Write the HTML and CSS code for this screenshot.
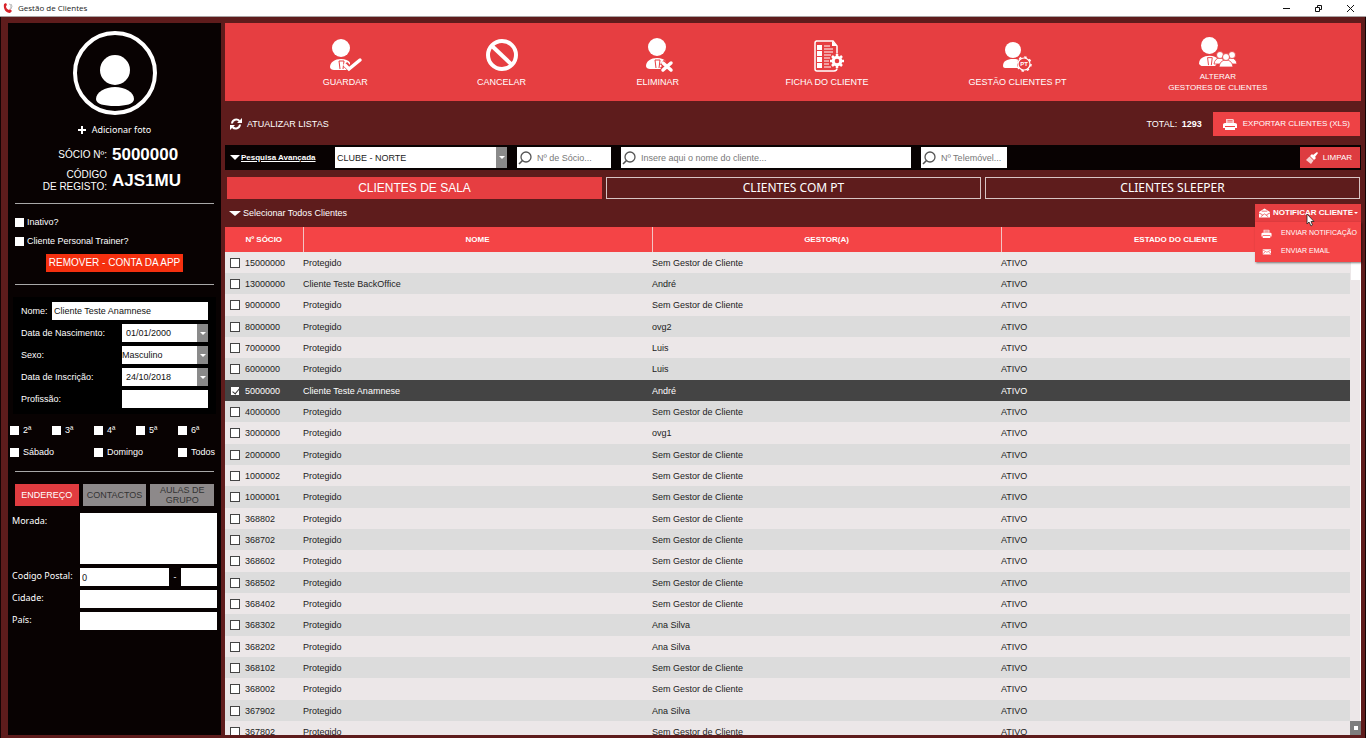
FILE: index.html
```html
<!DOCTYPE html>
<html lang="pt">
<head>
    <meta charset="UTF-8">
    <meta name="viewport" content="width=device-width, initial-scale=1.0">
    <title>Gestão de Clientes</title>
    <link rel="stylesheet" href="styles.css">
</head>
<body>

    <!-- shared icons -->
    <svg class="sprite" aria-hidden="true">
        <symbol id="i-suit" viewBox="0 0 20 32">
            <circle cx="11" cy="9" r="9" fill="#fff"/>
            <path d="M0 28c0-5 5-8 11-8s10 3 10 6l-4 5H4c-2 0-4-1-4-3z" fill="#fff"/>
            <path d="M9 22l1 8M14 22l-1 8M9 22h5" stroke="#e63e41" fill="none"/>
        </symbol>
        <symbol id="i-search" viewBox="0 0 14 14">
            <circle cx="8" cy="6" r="5" fill="none" stroke="#555" stroke-width="1.3"/>
            <path d="M4.500 9.500L1 13" stroke="#555" stroke-width="1.600"/>
        </symbol>
        <symbol id="i-print" viewBox="0 0 14 12">
            <path d="M3 5V1h7l1 1v3z" fill="#fff" opacity=".75"/>
            <path d="M4.500 2.500h5M4.500 4h5" stroke="#e63e41" stroke-width=".6"/>
            <path d="M0 6.500Q0 5 2 5h10q2 0 2 1.500V10h-2V8H2v2H0z" fill="#fff"/>
            <path d="M2 9h10v3H2z" fill="#fff"/>
        </symbol>
    </svg>

    <header class="titlebar">
        <svg class="app-logo" viewBox="0 0 10 10">
            <path d="M1 1L3 0l1 2-1 1c0 2 1 3 3 4l1-1 2 2-2 2C3 10 0 6 1 1z" fill="#d8232a"/>
            <path d="M6 1q2 0 2 2t-1 3M8 1q2 2 0 5" fill="none" stroke="#bbb" stroke-width="1"/>
        </svg>
        <span class="app-title">Gestão de Clientes</span>
        <div class="window-buttons">
            <button aria-label="Minimizar"><svg viewBox="0 0 9 9"><path d="M1 4.500h7" stroke="#111" fill="none"/></svg></button>
            <button aria-label="Restaurar"><svg viewBox="0 0 9 9"><path d="M1.500 3.500h4v4h-4zM3.500 3V1.500h4v4H6" stroke="#111" fill="none"/></svg></button>
            <button aria-label="Fechar"><svg viewBox="0 0 9 9"><path d="M1 1l7 7M8 1L1 8" stroke="#111" fill="none"/></svg></button>
        </div>
    </header>

    <div class="window">
        <aside class="sidebar">
            <div class="profile">
                <svg class="avatar" viewBox="0 0 84 84">
                    <circle cx="42" cy="42" r="40" fill="none" stroke="#fff" stroke-width="4"/>
                    <circle cx="42" cy="39" r="15" fill="#fff"/>
                    <path d="M23 68c0-7 9-12 19-12s19 5 19 12c0 5-8 7-19 7s-19-2-19-7z" fill="#fff"/>
                </svg>
                <button class="add-photo">
                    <svg viewBox="0 0 8 8"><path d="M4 0v8M0 4h8" stroke="#fff" stroke-width="2"/></svg>
                    Adicionar foto
                </button>
                <dl class="codes">
                    <dt>SÓCIO Nº:</dt><dd>5000000</dd>
                    <dt>CÓDIGO<br>DE REGISTO:</dt><dd>AJS1MU</dd>
                </dl>
            </div>

            <hr>

            <div class="flags">
                <label><input type="checkbox"> Inativo?</label>
                <label><input type="checkbox"> Cliente Personal Trainer?</label>
                <button class="remove-app">REMOVER - CONTA DA APP</button>
            </div>

            <hr>

            <form class="details">
                <div class="field">
                    <label for="nome">Nome:</label>
                    <input id="nome" class="wide" type="text" value="Cliente Teste Anamnese">
                </div>
                <div class="field">
                    <label for="nascimento">Data de Nascimento:</label>
                    <span class="combo date"><input id="nascimento" type="text" value="01/01/2000"><span class="drop"></span></span>
                </div>
                <div class="field">
                    <label for="sexo">Sexo:</label>
                    <span class="combo"><select id="sexo"><option>Masculino</option><option>Feminino</option></select><span class="drop"></span></span>
                </div>
                <div class="field">
                    <label for="inscricao">Data de Inscrição:</label>
                    <span class="combo date"><input id="inscricao" type="text" value="24/10/2018"><span class="drop"></span></span>
                </div>
                <div class="field">
                    <label for="profissao">Profissão:</label>
                    <input id="profissao" class="short" type="text">
                </div>
            </form>

            <div class="days">
                <label><input type="checkbox"> 2ª</label>
                <label><input type="checkbox"> 3ª</label>
                <label><input type="checkbox"> 4ª</label>
                <label><input type="checkbox"> 5ª</label>
                <label><input type="checkbox"> 6ª</label>
                <label class="double"><input type="checkbox"> Sábado</label>
                <label class="double"><input type="checkbox"> Domingo</label>
                <label><input type="checkbox"> Todos</label>
            </div>

            <hr>

            <div class="side-tabs">
                <button class="active">ENDEREÇO</button>
                <button>CONTACTOS</button>
                <button>AULAS DE GRUPO</button>
            </div>

            <form class="address">
                <label for="morada">Morada:</label>
                <textarea id="morada"></textarea>
                <label for="postal">Codigo Postal:</label>
                <div class="postal">
                    <input id="postal" type="text" value="0">
                    <span>-</span>
                    <input class="suffix" type="text" aria-label="Sufixo postal">
                </div>
                <label for="cidade">Cidade:</label>
                <input id="cidade" type="text">
                <label for="pais">País:</label>
                <input id="pais" type="text">
            </form>
        </aside>

        <main class="content">
            <nav class="toolbar">
                <button>
                    <svg viewBox="0 0 36 36">
                        <use href="#i-suit" x="3" y="2" width="20" height="32"/>
                        <path d="M18 27l5 5 11-9" fill="none" stroke="#e63e41" stroke-width="6"/>
                        <path d="M18 28l4 4 11-9" fill="none" stroke="#fff" stroke-width="3.500" stroke-linecap="round"/>
                    </svg>
                    <span>GUARDAR</span>
                </button>
                <button>
                    <svg viewBox="0 0 36 36">
                        <circle cx="19" cy="18" r="14" fill="none" stroke="#fff" stroke-width="4"/>
                        <path d="M9 9l20 19" stroke="#fff" stroke-width="4"/>
                    </svg>
                    <span>CANCELAR</span>
                </button>
                <button>
                    <svg viewBox="0 0 36 36">
                        <use href="#i-suit" x="6" y="1" width="20" height="32"/>
                        <path d="M22 25l9 8M31 25l-9 8" stroke="#e63e41" stroke-width="6"/>
                        <path d="M23 26l8 7M31 26l-8 7" stroke="#fff" stroke-width="3.500" stroke-linecap="round"/>
                    </svg>
                    <span>ELIMINAR</span>
                </button>
                <button>
                    <svg viewBox="0 0 36 36">
                        <path d="M7 4h17l4 5v22q0 3-3 3H8q-2 0-2-2V6q0-2 2-2z" fill="none" stroke="#fff" stroke-width="1.500"/>
                        <path d="M23 4v5h5z" fill="#fff"/>
                        <path d="M8 8h5v5H8zM8 14h5v5H8zM8 20h5v5H8zM8 26h5v5H8z" fill="#fff"/>
                        <path d="M15 9h6M15 12h9M15 15h9M15 18h7M15 21h6M15 24h5M15 27h5M15 30h7" stroke="#fff"/>
                        <circle cx="28" cy="24" r="7.500" fill="#e63e41"/>
                        <circle cx="28" cy="24" r="3.800" fill="none" stroke="#fff" stroke-width="3"/>
                        <path d="M28 17v3M28 28v3M21 24h3M32 24h3M23 19l2 2M31 27l2 2M23 29l2-2M31 21l2-2" stroke="#fff" stroke-width="2.500"/>
                    </svg>
                    <span>FICHA DO CLIENTE</span>
                </button>
                <button>
                    <svg viewBox="0 0 36 36">
                        <circle cx="14" cy="13" r="8" fill="#fff"/>
                        <path d="M4 29c0-5 4-7 10-7 5 0 9 1 10 4l-3 5H6c-1 0-2-1-2-2z" fill="#fff"/>
                        <circle cx="25" cy="27" r="7" fill="#e63e41"/>
                        <circle cx="25" cy="27" r="6" fill="none" stroke="#fff" stroke-width="1.200"/>
                        <circle cx="25" cy="27" r="7" fill="none" stroke="#fff" stroke-width="1.500" stroke-dasharray="2.500 3"/>
                        <text x="25" y="29" class="pt-text">PT</text>
                    </svg>
                    <span>GESTÃO CLIENTES PT</span>
                </button>
                <button class="two-lines">
                    <svg viewBox="0 0 40 32">
                        <use href="#i-suit" x="1" y="1" width="19" height="30"/>
                        <g fill="#fff" stroke="#e63e41" stroke-width=".8">
                            <path d="M16 28q1-6 6-6 4 0 5 6zM28 28q1-6 5-6 5 0 6 6z"/>
                            <circle cx="22" cy="19" r="3.500"/>
                            <circle cx="34" cy="19" r="3.500"/>
                            <path d="M21 31q1-7 7-7t7 7z"/>
                            <circle cx="28" cy="21" r="3.500"/>
                        </g>
                    </svg>
                    <span>ALTERAR<br>GESTORES DE CLIENTES</span>
                </button>
            </nav>

            <div class="list-actions">
                <button class="refresh">
                    <svg viewBox="0 0 12 12">
                        <path d="M2 5.500A4.300 4.300 0 0 1 9.500 3M10 6.500A4.300 4.300 0 0 1 2.500 9" fill="none" stroke="#fff" stroke-width="2"/>
                        <path d="M12 0v5H7zM0 12V7h5z" fill="#fff"/>
                    </svg>
                    ATUALIZAR LISTAS
                </button>
                <span class="total">TOTAL: <b>1293</b></span>
                <button class="export">
                    <svg viewBox="0 0 14 12"><use href="#i-print"/></svg>
                    EXPORTAR CLIENTES (XLS)
                </button>
            </div>

            <div class="search-bar">
                <a class="advanced" href="#"><i class="triangle"></i><span>Pesquisa Avançada</span></a>
                <span class="combo club"><select aria-label="Clube"><option>CLUBE - NORTE</option></select><span class="drop"></span></span>
                <label class="search number"><svg viewBox="0 0 14 14"><use href="#i-search"/></svg><input type="text" placeholder="Nº de Sócio..." aria-label="Nº de Sócio"></label>
                <label class="search name"><svg viewBox="0 0 14 14"><use href="#i-search"/></svg><input type="text" placeholder="Insere aqui o nome do cliente..." aria-label="Nome do cliente"></label>
                <label class="search phone"><svg viewBox="0 0 14 14"><use href="#i-search"/></svg><input type="text" placeholder="Nº Telemóvel..." aria-label="Nº Telemóvel"></label>
                <button class="clear">
                    <svg viewBox="0 0 12 12">
                        <path d="M11 0l1 1-3 4 1 1-2 2-4-4 2-2 1 1z" fill="#fff"/>
                        <path d="M3.500 4.500l4 4L5 12 0 8z" fill="#fff" opacity=".75"/>
                    </svg>
                    LIMPAR
                </button>
            </div>

            <div class="tabs">
                <button class="active">CLIENTES DE SALA</button>
                <button>CLIENTES COM PT</button>
                <button>CLIENTES SLEEPER</button>
            </div>

            <div class="selection">
                <button class="select-all"><i class="triangle"></i>Selecionar Todos Clientes</button>
                <div class="notify">
                    <button class="notify-button">
                        <svg viewBox="0 0 12 10">
                            <path d="M0 4l6-4 6 4v6H0z" fill="#fff"/>
                            <path d="M3 3h6M0 5l4 2M12 5L8 7M2 9l4-3 4 3" fill="none" stroke="#e63e41" stroke-width=".8"/>
                        </svg>
                        NOTIFICAR CLIENTE
                        <i class="caret"></i>
                    </button>
                    <div class="menu">
                        <button><svg viewBox="0 0 14 12"><use href="#i-print"/></svg>ENVIAR NOTIFICAÇÃO</button>
                        <button>
                            <svg viewBox="0 0 14 12"><path d="M2 3h11v7H2z" fill="#fff"/><path d="M2 4l5.500 3L13 4M2 9l3-2M13 9l-3-2" fill="none" stroke="#f44446" stroke-width=".8"/></svg>
                            ENVIAR EMAIL
                        </button>
                    </div>
                    <svg class="pointer" viewBox="0 0 9 14">
                        <path d="M1 1v10l2-2 2 4 1.500-1L5 8.500h3z" fill="#fff" stroke="#222" stroke-width=".8"/>
                    </svg>
                </div>
            </div>

            <div class="grid">
                <table>
                    <thead>
                        <tr><th class="col-id">Nº SÓCIO</th><th>NOME</th><th>GESTOR(A)</th><th>ESTADO DO CLIENTE</th></tr>
                    </thead>
                    <tbody>
                        <tr><td><label><input type="checkbox"> 15000000</label></td><td>Protegido</td><td>Sem Gestor de Cliente</td><td>ATIVO</td></tr>
                        <tr><td><label><input type="checkbox"> 13000000</label></td><td>Cliente Teste BackOffice</td><td>André</td><td>ATIVO</td></tr>
                        <tr><td><label><input type="checkbox"> 9000000</label></td><td>Protegido</td><td>Sem Gestor de Cliente</td><td>ATIVO</td></tr>
                        <tr><td><label><input type="checkbox"> 8000000</label></td><td>Protegido</td><td>ovg2</td><td>ATIVO</td></tr>
                        <tr><td><label><input type="checkbox"> 7000000</label></td><td>Protegido</td><td>Luis</td><td>ATIVO</td></tr>
                        <tr><td><label><input type="checkbox"> 6000000</label></td><td>Protegido</td><td>Luis</td><td>ATIVO</td></tr>
                        <tr class="selected"><td><label><input type="checkbox" checked> 5000000</label></td><td>Cliente Teste Anamnese</td><td>André</td><td>ATIVO</td></tr>
                        <tr><td><label><input type="checkbox"> 4000000</label></td><td>Protegido</td><td>Sem Gestor de Cliente</td><td>ATIVO</td></tr>
                        <tr><td><label><input type="checkbox"> 3000000</label></td><td>Protegido</td><td>ovg1</td><td>ATIVO</td></tr>
                        <tr><td><label><input type="checkbox"> 2000000</label></td><td>Protegido</td><td>Sem Gestor de Cliente</td><td>ATIVO</td></tr>
                        <tr><td><label><input type="checkbox"> 1000002</label></td><td>Protegido</td><td>Sem Gestor de Cliente</td><td>ATIVO</td></tr>
                        <tr><td><label><input type="checkbox"> 1000001</label></td><td>Protegido</td><td>Sem Gestor de Cliente</td><td>ATIVO</td></tr>
                        <tr><td><label><input type="checkbox"> 368802</label></td><td>Protegido</td><td>Sem Gestor de Cliente</td><td>ATIVO</td></tr>
                        <tr><td><label><input type="checkbox"> 368702</label></td><td>Protegido</td><td>Sem Gestor de Cliente</td><td>ATIVO</td></tr>
                        <tr><td><label><input type="checkbox"> 368602</label></td><td>Protegido</td><td>Sem Gestor de Cliente</td><td>ATIVO</td></tr>
                        <tr><td><label><input type="checkbox"> 368502</label></td><td>Protegido</td><td>Sem Gestor de Cliente</td><td>ATIVO</td></tr>
                        <tr><td><label><input type="checkbox"> 368402</label></td><td>Protegido</td><td>Sem Gestor de Cliente</td><td>ATIVO</td></tr>
                        <tr><td><label><input type="checkbox"> 368302</label></td><td>Protegido</td><td>Ana Silva</td><td>ATIVO</td></tr>
                        <tr><td><label><input type="checkbox"> 368202</label></td><td>Protegido</td><td>Ana Silva</td><td>ATIVO</td></tr>
                        <tr><td><label><input type="checkbox"> 368102</label></td><td>Protegido</td><td>Sem Gestor de Cliente</td><td>ATIVO</td></tr>
                        <tr><td><label><input type="checkbox"> 368002</label></td><td>Protegido</td><td>Sem Gestor de Cliente</td><td>ATIVO</td></tr>
                        <tr><td><label><input type="checkbox"> 367902</label></td><td>Protegido</td><td>Ana Silva</td><td>ATIVO</td></tr>
                        <tr><td><label><input type="checkbox"> 367802</label></td><td>Protegido</td><td>Sem Gestor de Cliente</td><td>ATIVO</td></tr>
                    </tbody>
                </table>
                <div class="scrollbar">
                    <div class="scroll-head"></div>
                    <div class="scroll-thumb"></div>
                    <div class="scroll-end"></div>
                </div>
            </div>
        </main>
    </div>

</body>
</html>
```
FILE: styles.css
```css
* {
    box-sizing: border-box;
}

body {
    margin: 0;
    height: 100vh;
    display: flex;
    flex-direction: column;
    overflow: hidden;
    background-color: #5e1c1c;
    color: #ffffff;
    font-family: "Liberation Sans", Arial, sans-serif;
    font-size: 9px;
    line-height: 12px;
}

button, input, select, textarea {
    margin: 0;
    padding: 0;
    border: none;
    border-radius: 0;
    font: inherit;
    color: inherit;
    background: none;
}

button {
    cursor: pointer;
}

svg {
    display: block;
    flex: none;
}

.sprite {
    position: absolute;
    width: 0;
    height: 0;
}

input[type="checkbox"] {
    appearance: none;
    flex: none;
    width: 9px;
    height: 9px;
    background-color: #ffffff;
}

hr {
    width: auto;
    height: 1px;
    margin: 0 7px;
    border: none;
    background-color: #a8a8a8;
}

/* title bar */
.titlebar {
    flex: none;
    display: flex;
    align-items: center;
    height: 17px;
    padding-left: 3px;
    background-color: #ffffff;
    border-bottom: 1px solid #a9a3a3;
    color: #222222;
}

.app-logo {
    width: 10px;
    height: 10px;
}

.app-title {
    margin-left: 5px;
    font-family: "Open Sans", "Noto Sans", sans-serif;
    font-size: 8px;
}

.window-buttons {
    display: flex;
    gap: 23px;
    margin-left: auto;
    padding-right: 11px;
}

.window-buttons svg {
    width: 9px;
    height: 9px;
}

.window {
    flex: 1;
    min-height: 0;
    display: flex;
    gap: 4px;
    padding: 6px 4px 3px 7px;
    border-left: 1px solid #140404;
    border-right: 1px solid #140404;
}

/* left panel */
.sidebar {
    flex: none;
    width: 213px;
    padding-top: 8px;
    background-color: #080202;
}

.profile {
    display: flex;
    flex-direction: column;
    align-items: center;
    height: 172px;
}

.avatar {
    width: 84px;
    height: 84px;
}

.add-photo {
    display: flex;
    align-items: center;
    gap: 6px;
    margin-top: 9px;
    font-family: "Noto Sans", sans-serif;
}

.add-photo svg {
    width: 8px;
    height: 8px;
}

.codes {
    display: grid;
    grid-template-columns: 99px 1fr;
    gap: 4px 5px;
    align-items: center;
    width: 100%;
    margin: 9px 0 0;
    font-size: 10px;
    text-align: right;
}

.codes dd {
    margin: 0;
    font-size: 17px;
    line-height: 20px;
    font-weight: bold;
    text-align: left;
}

.flags {
    display: flex;
    flex-direction: column;
    gap: 7px;
    height: 80px;
    padding: 12px 7px 0;
}

.flags label {
    display: flex;
    align-items: center;
    gap: 3px;
}

.remove-app {
    align-self: center;
    height: 18px;
    padding: 0 3px;
    background-color: #f5300f;
    font-size: 10px;
}

.details {
    display: flex;
    flex-direction: column;
    gap: 4px;
    margin: 12px 5px 0;
    padding: 5px 8px 6px;
    background-color: #000000;
}

.field {
    display: flex;
    align-items: center;
    justify-content: space-between;
    height: 18px;
}

.details input, .details select, .address input, .address textarea {
    height: 18px;
    background-color: #ffffff;
    color: #111111;
}

.details .wide {
    width: 156px;
    padding-left: 2px;
}

.details .short, .details .combo {
    width: 86px;
}

.combo {
    display: flex;
    background-color: #ffffff;
}

.combo input, .combo select {
    flex: 1;
    min-width: 0;
    appearance: none;
}

.date input {
    padding-left: 4px;
}

.drop {
    flex: none;
    display: flex;
    align-items: center;
    justify-content: center;
    width: 11px;
    background-color: #8a8a8a;
}

.drop::after {
    content: "";
    border: 3px solid transparent;
    border-top-color: #ffffff;
    border-bottom: none;
}

.days {
    display: grid;
    grid-template-columns: repeat(5, 42px);
    gap: 10px 0;
    margin: 10px 0 0 2px;
}

.days label {
    display: flex;
    align-items: center;
    gap: 4px;
    white-space: nowrap;
}

.days .double {
    grid-column: span 2;
}

.days + hr {
    margin-top: 13px;
}

.side-tabs {
    display: grid;
    grid-template-columns: repeat(3, 1fr);
    gap: 4px;
    margin: 12px 7px 7px;
}

.side-tabs button {
    height: 22px;
    background-color: #8d898a;
    color: #333333;
    line-height: 10px;
}

.side-tabs .active {
    background-color: #e03c40;
    color: #ffffff;
}

.address {
    display: grid;
    grid-template-columns: 68px minmax(0, 1fr);
    gap: 4px 0;
    margin: 0 4px;
    font-family: "Noto Sans", sans-serif;
}

.address label {
    padding-top: 2px;
    white-space: nowrap;
}

.address input {
    width: 100%;
    min-width: 0;
    padding-left: 2px;
}

.address textarea {
    width: 100%;
    height: 51px;
    resize: none;
}

.postal {
    display: flex;
    align-items: center;
}

.postal input {
    flex: 1;
}

.postal span {
    width: 12px;
    text-align: center;
}

.postal .suffix {
    flex: none;
    width: 36px;
}

/* right side */
.content {
    flex: 1;
    min-width: 0;
    display: flex;
    flex-direction: column;
}

.toolbar {
    flex: none;
    display: grid;
    grid-template-columns: 156fr 156fr 156fr 182fr 198fr 202fr;
    height: 78px;
    padding: 0 42px;
    background-color: #e63e41;
}

.toolbar button {
    display: flex;
    flex-direction: column;
    align-items: center;
    justify-content: center;
    gap: 3px;
}

.toolbar svg {
    width: 36px;
    height: 36px;
}

.toolbar .two-lines {
    padding-top: 4px;
    font-size: 8px;
    line-height: 11px;
}

.toolbar .two-lines svg {
    width: 40px;
    height: 32px;
}

.pt-text {
    fill: #ffffff;
    font-size: 6px;
    font-weight: bold;
    text-anchor: middle;
}

.list-actions {
    flex: none;
    display: flex;
    align-items: center;
    height: 44px;
    padding: 2px 1px 0 5px;
}

.refresh, .export, .clear, .notify-button, .select-all, .advanced {
    display: flex;
    align-items: center;
}

.refresh {
    gap: 5px;
}

.refresh svg {
    width: 12px;
    height: 12px;
}

.total {
    margin-left: auto;
}

.total b {
    margin-left: 2px;
}

.export {
    gap: 6px;
    height: 24px;
    margin-left: 11px;
    padding: 0 10px;
    background-color: #ee4245;
}

.export svg {
    width: 14px;
    height: 12px;
}

.export, .clear, .notify-button {
    font-size: 8px;
}

.search-bar {
    flex: none;
    display: flex;
    gap: 10px;
    height: 25px;
    padding: 2px 1px 2px 5px;
    background-color: #080202;
}

.triangle {
    border: 5px solid transparent;
    border-top-color: #ffffff;
    border-bottom: none;
}

.advanced {
    gap: 1px;
    width: 95px;
    color: #ffffff;
    font-size: 8px;
    font-weight: bold;
    text-decoration: none;
}

.advanced span {
    text-decoration: underline;
}

.club {
    flex: 0 1 172px;
    color: #222222;
}

.club select {
    padding-left: 2px;
}

.search {
    display: flex;
    align-items: center;
    gap: 5px;
    min-width: 0;
    padding-left: 1px;
    background-color: #ffffff;
    color: #222222;
}

.search svg {
    width: 14px;
    height: 14px;
}

.search input {
    flex: 1;
    min-width: 0;
}

.search input::placeholder {
    color: #777777;
}

.number {
    flex: 0 1 94px;
}

.name {
    flex: 0 1 290px;
}

.phone {
    flex: 0 1 86px;
}

.clear {
    gap: 5px;
    margin-left: auto;
    padding: 0 8px 0 6px;
    background-color: #dd3c40;
}

.clear svg {
    width: 12px;
    height: 12px;
}

.tabs {
    flex: none;
    display: grid;
    grid-template-columns: repeat(3, 1fr);
    gap: 4px;
    margin: 7px 1px 0 2px;
}

.tabs button {
    height: 22px;
    border: 1px solid #d8c4c4;
    font-family: "Noto Sans", sans-serif;
    font-size: 12px;
}

.tabs .active {
    border-color: #e63e41;
    background-color: #e63e41;
    font-family: inherit;
}

.selection {
    flex: none;
    display: flex;
    justify-content: space-between;
    align-items: center;
    height: 28px;
    padding-left: 4px;
}

.select-all {
    gap: 2px;
}

.select-all .triangle {
    border-width: 5px 6px 0;
}

.notify {
    position: relative;
    width: 106px;
}

.notify-button {
    gap: 3px;
    width: 100%;
    height: 18px;
    padding: 0 3px 0 4px;
    background-color: #e63e41;
    font-weight: bold;
    white-space: nowrap;
}

.notify-button svg {
    width: 11px;
    height: 10px;
}

.caret {
    margin-left: -2px;
    border: 2px solid transparent;
    border-top-color: #ffffff;
    border-bottom: none;
}

.menu {
    position: absolute;
    top: 100%;
    left: 0;
    width: 100%;
    padding: 2px 0;
    background-color: #f44446;
    box-shadow: 1px 1px 2px rgba(0, 0, 0, 0.5);
    font-size: 7px;
    z-index: 1;
}

.menu button {
    display: flex;
    align-items: center;
    gap: 9px;
    width: 100%;
    height: 18px;
    padding-left: 6px;
    white-space: nowrap;
}

.menu svg {
    width: 11px;
    height: 9px;
}

.pointer {
    position: absolute;
    top: 9px;
    left: 51px;
    width: 9px;
    height: 14px;
    z-index: 2;
}

/* client list */
.grid {
    flex: 1;
    min-height: 0;
    display: flex;
    overflow: hidden;
}

table {
    flex: 1;
    align-self: flex-start;
    width: 100%;
    min-width: 0;
    table-layout: fixed;
    border-collapse: collapse;
    color: #222222;
}

th {
    height: 25px;
    padding: 0;
    background-color: #f44446;
    color: #ffffff;
    font-size: 8px;
    text-align: center;
}

th + th {
    border-left: 1px solid #f3c4c4;
}

.col-id {
    width: 78px;
}

td {
    height: 21px;
    padding: 0;
    background-color: #ece7e8;
}

tr:nth-child(3n) td {
    height: 22px;
}

tr:nth-child(even) td {
    background-color: #dcdcdc;
}

tr.selected td {
    background-color: #444444;
    color: #ffffff;
}

td label {
    display: flex;
    align-items: center;
    gap: 5px;
    padding-left: 5px;
}

td input[type="checkbox"] {
    width: 10px;
    height: 10px;
    border: 1px solid #444444;
}

td input[type="checkbox"]:checked::after {
    content: "";
    display: block;
    width: 3px;
    height: 6px;
    margin-left: 3px;
    border: solid #333333;
    border-width: 0 1px 1px 0;
    transform: rotate(40deg);
}

.scrollbar {
    flex: none;
    display: flex;
    flex-direction: column;
    width: 11px;
    background-color: #ece7e8;
    border-right: 1px solid #ffffff;
}

.scroll-head {
    height: 25px;
    margin-right: -1px;
    background-color: #f44446;
}

.scroll-thumb {
    height: 28px;
    margin-left: 1px;
    background-color: #ffffff;
}

.scroll-end {
    display: flex;
    align-items: center;
    justify-content: center;
    height: 14px;
    margin-top: auto;
    margin-right: -1px;
    background-color: #7d7d7d;
}

.scroll-end::after {
    content: "";
    width: 4px;
    height: 4px;
    background-color: #ffffff;
}
```
